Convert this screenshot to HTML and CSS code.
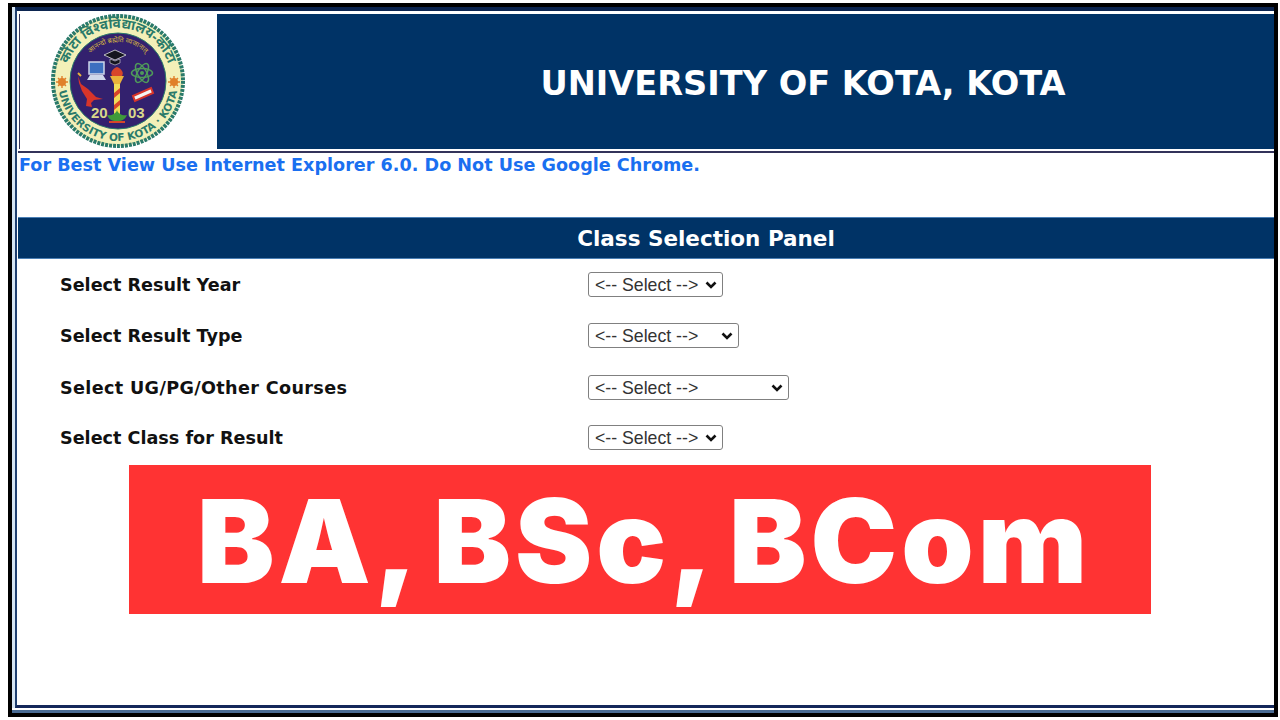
FILE: index.html
```html
<!DOCTYPE html>
<html lang="en">
<head>
    <meta charset="UTF-8">
    <title>University of Kota - Class Selection Panel</title>
    <link rel="stylesheet" href="styles.css">
</head>
<body>
    <div class="frame">
        <div class="inner">
            <div class="header">
                <div class="logo-cell">
                    <svg class="logo" viewBox="0 0 136 136" width="136" height="136">
                        <defs>
                            <path id="arcTop" d="M15 68a53 53 0 0 1 106 0"/>
                            <path id="arcBottom" d="M8 68a60 60 0 0 0 120 0"/>
                            <path id="arcMotto" d="M29 68a39 39 0 0 1 78 0"/>
                        </defs>
                        <circle cx="68" cy="68" r="65" fill="#f3f0b8" stroke="#2a7a6a" stroke-width="4" stroke-dasharray="3 1"/>
                        <circle cx="68" cy="68" r="48" fill="#33216e" stroke="#2a7a6a"/>
                        <text class="logo-hi"><textPath href="#arcTop" startOffset="50%" text-anchor="middle">कोटा विश्वविद्यालय-कोटा</textPath></text>
                        <text class="logo-en"><textPath href="#arcBottom" startOffset="50%" text-anchor="middle">UNIVERSITY OF KOTA · KOTA</textPath></text>
                        <text class="logo-motto"><textPath href="#arcMotto" startOffset="50%" text-anchor="middle">आनन्दो ब्रह्मेति व्यजानात्</textPath></text>
                        <!-- side suns -->
                        <g fill="#e0802a">
                            <circle cx="12" cy="69" r="4"/>
                            <circle cx="124" cy="69" r="4"/>
                        </g>
                        <g stroke="#e0802a" stroke-width="1.4">
                            <path d="M6 69h12M12 63v12M8 65l8 8M16 65l-8 8"/>
                            <path d="M118 69h12M124 63v12M120 65l8 8M128 65l-8 8"/>
                        </g>
                        <!-- cap -->
                        <path d="M54 42l11-5 11 5-11 5z" fill="#15151f" stroke="#ddd" stroke-width=".8"/>
                        <path d="M60 46v4l5 2 5-2v-4l-5 2z" fill="#15151f" stroke="#ddd" stroke-width=".6"/>
                        <!-- computer -->
                        <rect x="39" y="49" width="15" height="12" fill="#3d6fc0" stroke="#cfd6ea" stroke-width="1.5"/>
                        <path d="M40 62h13l3 5H37z" fill="#cfd6ea"/>
                        <!-- atom -->
                        <g fill="none" stroke="#4f9a5a" stroke-width="1.5">
                            <ellipse cx="92" cy="60" rx="10.5" ry="4.5"/>
                            <ellipse cx="92" cy="60" rx="10.5" ry="4.5" transform="rotate(60 92 60)"/>
                            <ellipse cx="92" cy="60" rx="10.5" ry="4.5" transform="rotate(120 92 60)"/>
                        </g>
                        <circle cx="92" cy="60" r="2" fill="#4f9a5a"/>
                        <!-- torch -->
                        <path d="M67 54c5 2 7 6 5 9H62c-2-3 0-7 5-9z" fill="#d8452a"/>
                        <path d="M60 63h14l-4 8h-6z" fill="#e9b23a"/>
                        <rect x="64" y="71" width="6" height="30" fill="#f0dc5a"/>
                        <path d="M64 80l6-5v5l-6 5zM64 92l6-5v5l-6 5z" fill="#d8452a"/>
                        <path d="M67 97c-1 4-6 6-10 5 2 4 4 6 10 6s8-2 10-6c-4 1-9-1-10-5z" fill="#3f9a3a"/>
                        <path d="M59 108h16v2H59z" fill="#d8452a"/>
                        <!-- runner -->
                        <path d="M28 63l3 8 7 5 8 8 7 2-9 1-3 3 1 4-6-1 1-7-5-8-3-8z" fill="#d8352a"/>
                        <path d="M31 63l-3-3" stroke="#e9b23a" stroke-width="2"/>
                        <!-- scroll -->
                        <path d="M83 83l18-8 2 5-18 8z" fill="#f4f4f4" stroke="#d8352a" stroke-width="2"/>
                        <text class="logo-year" x="41" y="105">20</text>
                        <text class="logo-year" x="78" y="105">03</text>
                    </svg>
                </div>
                <div class="title-cell">
                    <h1>UNIVERSITY OF KOTA, KOTA</h1>
                </div>
            </div>
            <p class="notice">For Best View Use Internet Explorer 6.0. Do Not Use Google Chrome.</p>
            <h2 class="panel-title">Class Selection Panel</h2>
            <form class="panel">
                <div class="row">
                    <label>Select Result Year</label>
                    <select class="w-year"><option>&lt;-- Select --&gt;</option></select>
                </div>
                <div class="row">
                    <label>Select Result Type</label>
                    <select class="w-type"><option>&lt;-- Select --&gt;</option></select>
                </div>
                <div class="row row-course">
                    <label>Select UG/PG/Other Courses</label>
                    <select class="w-course"><option>&lt;-- Select --&gt;</option></select>
                </div>
                <div class="row">
                    <label>Select Class for Result</label>
                    <select class="w-year"><option>&lt;-- Select --&gt;</option></select>
                </div>
            </form>
            <div class="banner">BA, BSc, BCom</div>
        </div>
        <div class="base-line"></div>
    </div>
</body>
</html>
```
FILE: styles.css
```css
html, body {
    margin: 0;
    height: 100%;
    background: #fff;
    overflow: hidden;
}
.frame {
    box-sizing: border-box;
    width: 1270px;
    height: 714px;
    margin: 3px 0 0 8px;
    border: 4px solid #000;
    background: #fff;
}
.inner {
    box-sizing: border-box;
    height: 701px;
    margin-left: 3px;
    padding-left: 1px;
    border-left: 2px solid #1f3f70;
    border-top: 4px solid #0c2550;
    border-bottom: 3px solid #14285a;
    box-shadow: -3px 0 0 #d5e4f2;
    font-family: "DejaVu Sans", Verdana, sans-serif;
}
.base-line {
    height: 3px;
    margin: 2px 0 0 0;
    background: #4a6c94;
}
.header {
    display: flex;
    padding: 3px 0 2px;
    border-bottom: 2px solid #33335a;
}
.logo-cell {
    box-sizing: border-box;
    width: 198px;
    height: 135px;
    margin-left: 1px;
    border-left: 1px solid #33335a;
    display: flex;
    align-items: center;
    justify-content: center;
}
.logo {
    flex: none;
    margin: -1px 0 0 -2px;
}
.logo-en {
    font: bold 10.5px "DejaVu Sans", sans-serif;
    fill: #2a7a6a;
}
.logo-hi {
    font: bold 13.5px "Noto Sans", "DejaVu Sans", sans-serif;
    fill: #2a7a6a;
}
.logo-motto {
    font: 7px "Noto Sans", "DejaVu Sans", sans-serif;
    fill: #d8b840;
}
.logo-year {
    font: bold 15px "Liberation Sans", sans-serif;
    fill: #d8d88a;
}
.title-cell {
    flex: 1;
    background: #003366;
    display: flex;
    align-items: center;
    justify-content: center;
    padding: 4px 0 0 115px;
}
h1 {
    margin: 0;
    font-size: 33.6px;
    font-weight: bold;
    color: #fff;
}
.notice {
    box-sizing: border-box;
    height: 64px;
    margin: 0;
    padding: 2px 0 0 1px;
    font-size: 17.6px;
    font-weight: bold;
    line-height: 20px;
    color: #1a6ff0;
}
.panel-title {
    box-sizing: border-box;
    height: 42px;
    margin: 0;
    padding: 1px 0 0 120px;
    line-height: 40px;
    background: #003366;
    border-top: 1px solid #4a7fb5;
    border-bottom: 1px solid #4a7fb5;
    text-align: center;
    font-size: 21.5px;
    color: #fff;
}
.panel {
    padding: 0 0 0 42px;
}
.row {
    box-sizing: border-box;
    display: flex;
    align-items: center;
    height: 51px;
}
.row-course {
    padding-top: 2px;
}
.row-course label {
    letter-spacing: .35px;
}
.row label {
    width: 528px;
    font-size: 17.6px;
    font-weight: bold;
    color: #111;
}
select {
    appearance: none;
    box-sizing: border-box;
    height: 25px;
    padding: 0 0 0 6px;
    border: 1.5px solid #808080;
    border-radius: 3px;
    font: 17.7px "Liberation Sans", Arial, sans-serif;
    color: #333;
    background: #fff url("data:image/svg+xml,%3Csvg xmlns='http://www.w3.org/2000/svg' width='12' height='8'%3E%3Cpath d='M1.5 1.5 6 6l4.5-4.5' fill='none' stroke='%23111' stroke-width='2.6'/%3E%3C/svg%3E") no-repeat right 5px center;
}
.w-year { width: 135px; }
.w-type { width: 151px; }
.w-course { width: 201px; }
.banner {
    box-sizing: border-box;
    width: 1022px;
    height: 149px;
    margin: 2px 0 0 111px;
    padding-left: 8px;
    background: #ff3333;
    color: #fff;
    font: 900 116px/153px Inter, "Open Sans", sans-serif;
    letter-spacing: 4px;
    word-spacing: -9px;
    text-align: center;
    overflow: hidden;
}
```
